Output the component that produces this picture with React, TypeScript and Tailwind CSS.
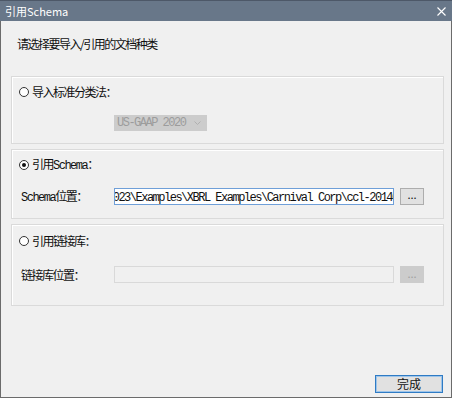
import React from "react";

const cjk = { fontFamily: '"Noto Sans CJK SC", "Noto Sans", sans-serif' };
const mono = { fontFamily: '"Liberation Mono", "Noto Sans CJK SC", monospace' };

const Radio = ({ checked }: { checked?: boolean }) => (
  <span className="w-[10px] h-[10px] rounded-full border border-[#333] bg-white flex items-center justify-center shrink-0">
    {checked && <span className="w-[4px] h-[4px] rounded-full bg-[#111]" />}
  </span>
);

const Mono = ({ children }: { children: React.ReactNode }) => (
  <span className="text-[12px] tracking-[-1.5px]" style={mono}>
    {children}
  </span>
);

const Group = ({ h, children }: { h: string; children: React.ReactNode }) => (
  <div className={`ml-[10px] w-[433px] ${h} border border-[#dadada] shadow-[inset_1px_1px_0_#fff] flex flex-col`}>
    {children}
  </div>
);

export default function App() {
  return (
    <div className="w-[452px] h-[398px] flex flex-col bg-[#f0f0f0] text-[12px] text-[#111] tracking-[-1.5px]" style={cjk}>
      {/* title bar */}
      <div className="h-[21px] bg-[#687789] border-t border-[#4d5868] flex items-center justify-between pl-[5px] pr-[6px] text-white shrink-0">
        <span className="text-[11px] leading-[14px] tracking-normal">引用Schema</span>
        <svg width="9" height="9" viewBox="0 0 9 9" stroke="#fff" strokeWidth="1.1" fill="none">
          <path d="M0.5 0.5 L8.5 8.5 M8.5 0.5 L0.5 8.5" />
        </svg>
      </div>

      <div className="flex-1 flex flex-col border-x border-b border-[#6b6b6b]">
        <div className="mt-[16px] ml-[16px] leading-[14px]">请选择要导入/引用的文档种类</div>

        <div className="mt-[25px]">
          <Group h="h-[68px]">
            <div className="mt-[8px] ml-[7px] h-[14px] flex items-center gap-[3px] leading-[14px]">
              <Radio />
              <span>导入标准分类法：</span>
            </div>
            <div className="mt-[16px] ml-[102px] w-[93px] h-[16px] bg-[#cccccc] flex items-center justify-between pl-[3px] pr-[6px] text-[#9c9c9c]">
              <Mono>US-GAAP 2020</Mono>
              <svg width="7" height="4" viewBox="0 0 7 4" fill="none" stroke="#b0b0b0">
                <path d="M0.5 0.5 L3.5 3.5 L6.5 0.5" />
              </svg>
            </div>
          </Group>
        </div>

        <div className="mt-[5px]">
          <Group h="h-[70px]">
            <div className="mt-[8px] ml-[7px] h-[14px] flex items-center gap-[3px] leading-[14px]">
              <Radio checked />
              <span>
                引用<Mono>Schema</Mono>：
              </span>
            </div>
            <div className="mt-[16px] flex items-center h-[17px]">
              <span className="ml-[9px] w-[93px] leading-[14px]">
                <Mono>Schema</Mono>位置：
              </span>
              <div className="w-[280px] h-[17px] bg-white border border-[#6f9fd8] overflow-hidden flex items-center whitespace-nowrap">
                <span className="ml-[-8px]">
                  <Mono>2023\Examples\XBRL Examples\Carnival Corp\ccl-20140930.xsd</Mono>
                </span>
              </div>
              <div className="ml-[6px] w-[24px] h-[17px] bg-[#e1e1e1] border border-[#adadad] flex items-end justify-center text-[#111] tracking-[0px] leading-none pb-[4px] text-[11px]">
                ...
              </div>
            </div>
          </Group>
        </div>

        <div className="mt-[5px]">
          <Group h="h-[82px]">
            <div className="mt-[9px] ml-[7px] h-[14px] flex items-center gap-[3px] leading-[14px]">
              <Radio />
              <span>引用链接库：</span>
            </div>
            <div className="mt-[18px] flex items-center h-[17px]">
              <span className="ml-[9px] w-[93px] leading-[14px]">链接库位置：</span>
              <div className="w-[280px] h-[17px] bg-[#f0f0f0] border border-[#d9d9d9]" />
              <div className="ml-[6px] w-[24px] h-[17px] bg-[#cccccc] flex items-end justify-center text-[#a0a0a0] tracking-[0px] leading-none pb-[4px] text-[11px]">
                ...
              </div>
            </div>
          </Group>
        </div>

        <div className="mt-auto mb-[4px] mr-[8px] self-end w-[68px] h-[18px] border border-[#2f7bc4] bg-[#e1e1e1] shadow-[inset_0_0_0_1px_#9ec5ea] flex items-center justify-center leading-[14px] tracking-normal">
          完成
        </div>
      </div>
    </div>
  );
}
